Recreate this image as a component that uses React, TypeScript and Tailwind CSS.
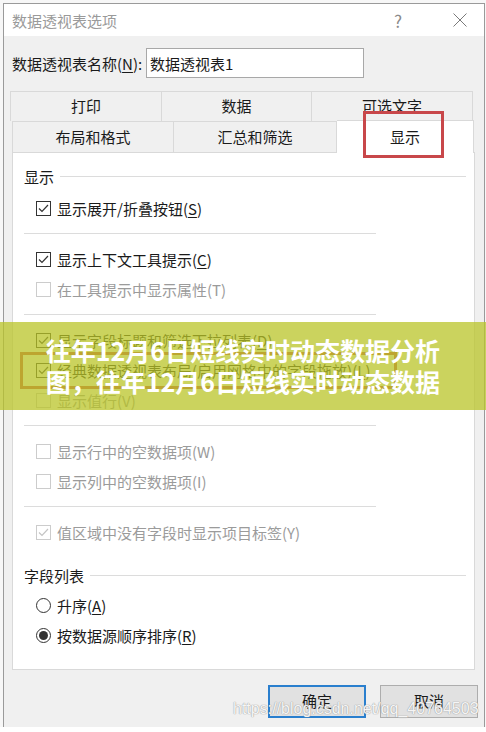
import React from "react";

const font = { fontFamily: '"Noto Sans CJK SC", "Noto Sans", sans-serif' };

function Check({ checked, disabled }: { checked?: boolean; disabled?: boolean }) {
  return (
    <span
      className={`w-[15px] h-[15px] border bg-white flex items-center justify-center shrink-0 ${
        disabled ? "border-[#cccccc]" : "border-[#333333]"
      }`}
    >
      {checked && (
        <svg width="13" height="13" viewBox="0 0 13 13">
          <path
            d="M2 6.5 L5 9.5 L11 3"
            fill="none"
            stroke={disabled ? "#c4c4c4" : "#333333"}
            strokeWidth="1.2"
          />
        </svg>
      )}
    </span>
  );
}

function Row({
  label,
  checked,
  disabled,
}: {
  label: React.ReactNode;
  checked?: boolean;
  disabled?: boolean;
}) {
  return (
    <div className="h-[30px] flex items-center pl-[12px] gap-[6px]">
      <Check checked={checked} disabled={disabled} />
      <span className={`text-[15px] leading-none ${disabled ? "text-[#9b9b9b]" : "text-[#1a1a1a]"}`}>
        {label}
      </span>
    </div>
  );
}

function Radio({ label, selected }: { label: React.ReactNode; selected?: boolean }) {
  return (
    <div className="h-[30px] flex items-center pl-[12px] gap-[6px]">
      <span className="w-[15px] h-[15px] rounded-full border border-[#333333] bg-white flex items-center justify-center shrink-0">
        {selected && <span className="w-[9px] h-[9px] rounded-full bg-[#333333]" />}
      </span>
      <span className="text-[15px] leading-none text-[#1a1a1a]">{label}</span>
    </div>
  );
}

function Sep() {
  return <div className="my-[10px] h-px bg-[#dcdcdc] w-[352px]" />;
}

function Heading({ text }: { text: string }) {
  return (
    <div className="h-[20px] flex items-center gap-[6px] pr-[8px]">
      <span className="text-[15px] leading-none text-[#1a1a1a]">{text}</span>
      <span className="flex-1 h-px bg-[#dcdcdc]" />
    </div>
  );
}

const U = ({ c }: { c: string }) => <span className="underline underline-offset-2">{c}</span>;

export default function App() {
  return (
    <div className="w-[486px] h-[732px] relative overflow-hidden bg-[#f7f7f7]" style={font}>
      {/* background spreadsheet hints */}
      <div className="absolute left-0 top-[727px] w-full h-[5px] bg-white" />
      <div className="ml-[3px] mt-[3px] w-[482px] h-[725px] border border-[#9a9a9a] bg-[#f0f0f0] flex flex-col">
        {/* title bar */}
        <div className="h-[32px] bg-white flex items-center pl-[8px] shrink-0">
          <span className="text-[15px] text-[#9a9a9a] leading-none flex-1">数据透视表选项</span>
          <span className="text-[17px] text-[#8a8a8a] leading-none w-[20px] text-center mr-[44px]">?</span>
          <svg width="16" height="16" viewBox="0 0 16 16" className="mr-[16px]">
            <path d="M1.5 1.5 L14.5 14.5 M14.5 1.5 L1.5 14.5" stroke="#7a7a7a" strokeWidth="1" fill="none" />
          </svg>
        </div>

        {/* name row */}
        <div className="flex items-center h-[30px] mt-[12px] pl-[8px] shrink-0">
          <span className="text-[15px] text-[#1a1a1a] leading-none w-[134px]">
            数据透视表名称(<U c="N" />):
          </span>
          <div className="w-[218px] h-[30px] bg-white border border-[#a8a8a8] flex items-center pl-[3px]">
            <span className="text-[15px] text-[#1a1a1a] leading-none">数据透视表1</span>
          </div>
        </div>

        {/* tabs */}
        <div className="mt-[13px] ml-[6px] w-[464px] shrink-0">
          <div className="flex h-[30px]">
            <div className="w-[152px] border border-[#d9d9d9] border-b-0 flex items-center justify-center text-[15px] text-[#1a1a1a]">打印</div>
            <div className="w-[150px] border-t border-r border-[#d9d9d9] flex items-center justify-center text-[15px] text-[#1a1a1a]">数据</div>
            <div className="w-[161px] border-t border-r border-[#d9d9d9] flex items-center justify-center text-[15px] text-[#1a1a1a]">可选文字</div>
          </div>
          <div className="flex h-[31px] ml-[2px]">
            <div className="w-[162px] border border-[#d9d9d9] border-b-0 flex items-center justify-center text-[15px] text-[#1a1a1a]">布局和格式</div>
            <div className="w-[163px] border-t border-r border-[#d9d9d9] flex items-center justify-center text-[15px] text-[#1a1a1a]">汇总和筛选</div>
            <div className="w-[137px] bg-white border-t border-r border-[#d9d9d9] flex items-center justify-center text-[15px] text-[#1a1a1a] mt-[-1px] h-[33px] relative z-10">显示</div>
          </div>
        </div>

        {/* panel */}
        <div className="ml-[8px] w-[463px] bg-white border border-[#d9d9d9] pt-[13px] pb-[19px] pl-[11px] shrink-0">
          <Heading text="显示" />
          <div className="h-[7px]" />
          <Row checked label={<>显示展开/折叠按钮(<U c="S" />)</>} />
          <Sep />
          <Row checked label={<>显示上下文工具提示(<U c="C" />)</>} />
          <Row disabled label="在工具提示中显示属性(T)" />
          <Sep />
          <Row checked label={<>显示字段标题和筛选下拉列表(<U c="D" />)</>} />
          <Row checked label={<>经典数据透视表布局(启用网格中的字段拖放)(<U c="L" />)</>} />
          <Row disabled label="显示值行(V)" />
          <Sep />
          <Row disabled label="显示行中的空数据项(W)" />
          <Row disabled label="显示列中的空数据项(I)" />
          <Sep />
          <Row checked disabled label="值区域中没有字段时显示项目标签(Y)" />
          <div className="h-[18px]" />
          <Heading text="字段列表" />
          <div className="h-[5px]" />
          <Radio label={<>升序(<U c="A" />)</>} />
          <Radio selected label={<>按数据源顺序排序(<U c="R" />)</>} />
        </div>

        {/* buttons */}
        <div className="flex justify-end gap-[14px] pr-[6px] mt-[15px] shrink-0">
          <div className="w-[98px] h-[33px] bg-[#e1e1e1] border-2 border-[#2a7fce] flex items-center justify-center text-[15px] text-[#1a1a1a]">确定</div>
          <div className="w-[98px] h-[33px] bg-[#e1e1e1] border border-[#adadad] flex items-center justify-center text-[15px] text-[#1a1a1a]">取消</div>
        </div>
      </div>

      {/* red highlight on 显示 tab */}
      <div className="absolute left-[363px] top-[111px] w-[81px] h-[47px] border-[3px] border-[#c8474a] z-20" />
      {/* red highlight on classic layout */}
      <div className="absolute left-[20px] top-[352px] w-[377px] h-[37px] border-[3px] border-[#c8474a] z-20" />

      {/* watermark */}
      <div
        className="absolute left-[233px] top-[701px] text-[16px] leading-none text-white/90 z-30 [text-shadow:0_0_1px_#9a9a9a,0_0_1px_#9a9a9a]"
        style={{ fontFamily: '"Liberation Sans", Arial, sans-serif' }}
      >
        https://blog.csdn.net/qq_40764503
      </div>

      {/* overlay banner */}
      <div className="absolute left-0 top-[322px] w-[486px] h-[88px] bg-[#b9c428]/75 z-40 flex flex-col items-center justify-center">
        <span className="text-[25px] leading-[31px] font-bold text-white">往年12月6日短线实时动态数据分析</span>
        <span className="text-[25px] leading-[31px] font-bold text-white">图，往年12月6日短线实时动态数据</span>
      </div>
    </div>
  );
}
